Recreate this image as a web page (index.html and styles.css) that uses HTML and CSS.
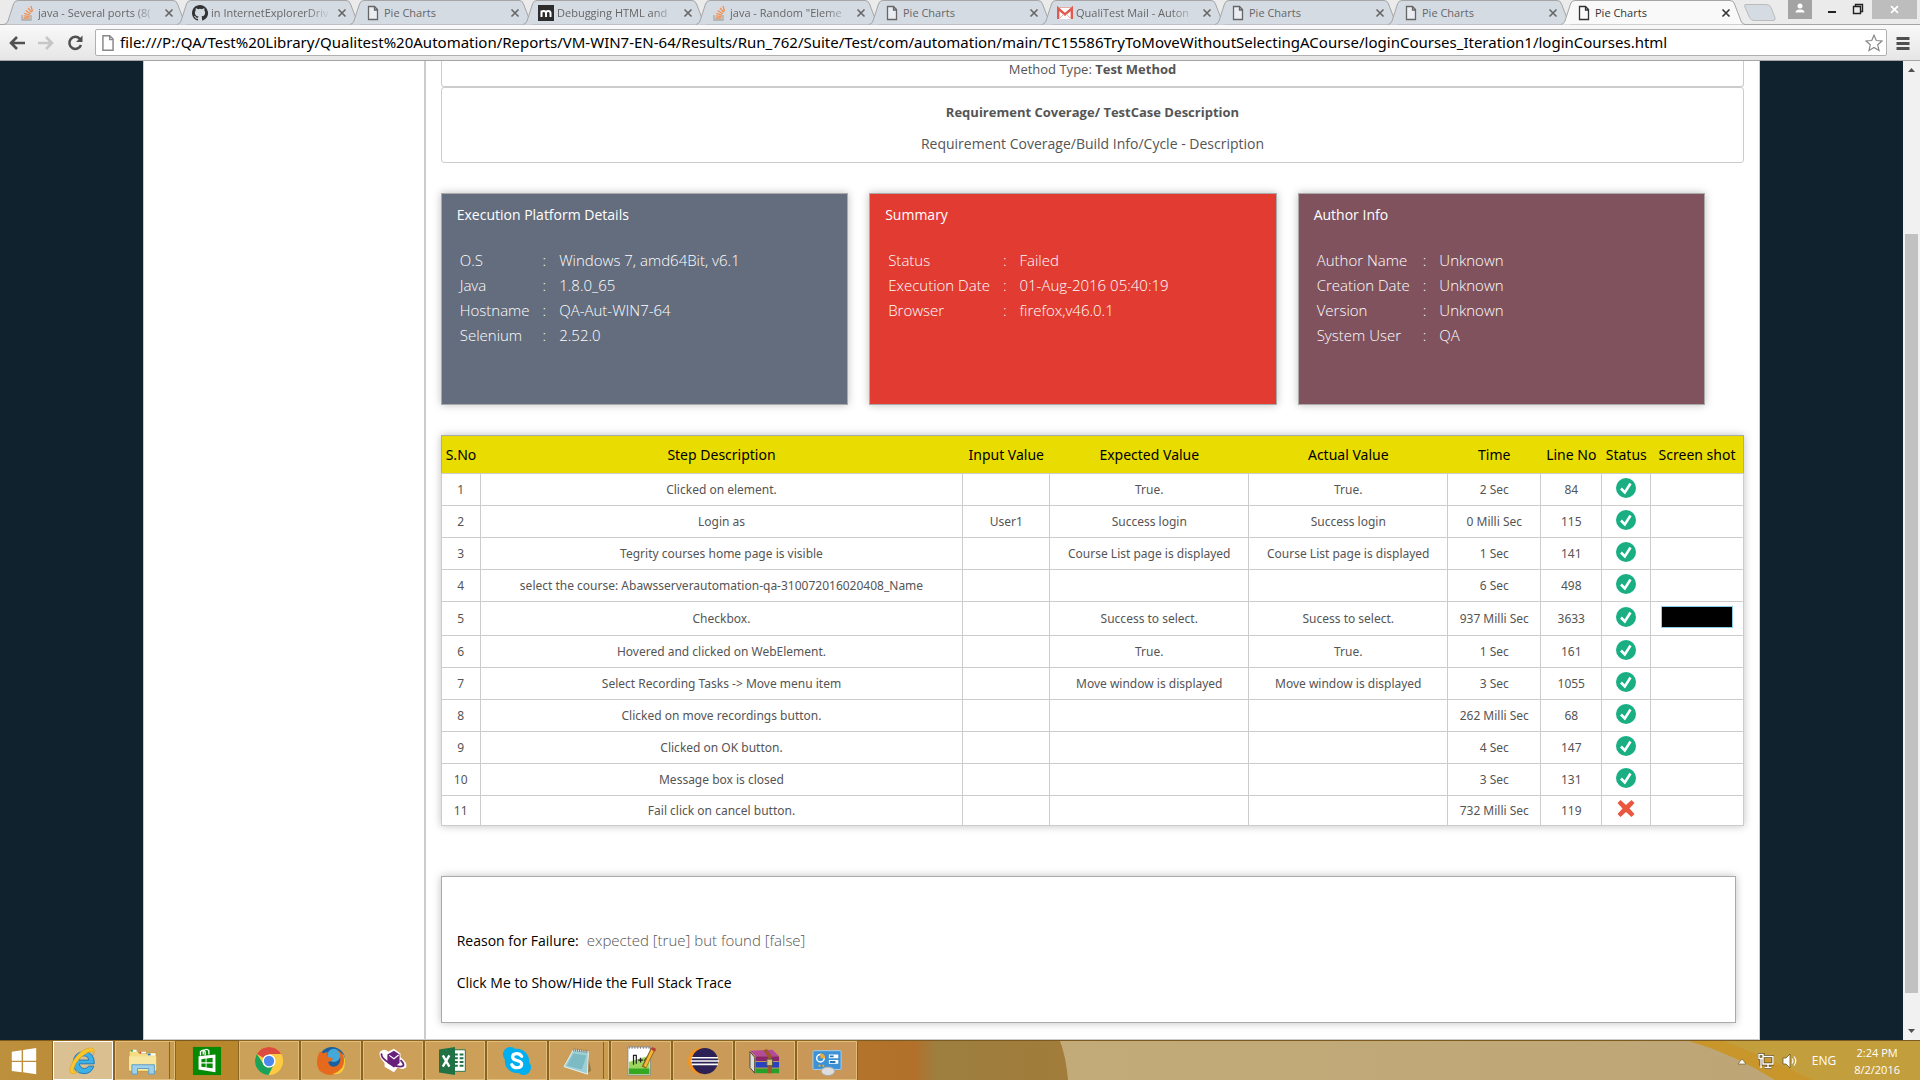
FILE: index.html
```html
<!DOCTYPE html>
<html lang="en">
<head>
<meta charset="utf-8">
<title>Pie Charts</title>
<link rel="stylesheet" href="styles.css">
</head>
<body>
<svg class="defs" aria-hidden="true">
  <symbol id="page" viewBox="0 0 16 16"><path d="M3.5 1.5h6l3 3v10h-9zM9.500 1.500v3.500h3" fill="#fff" fill-opacity=".5" stroke="currentColor" stroke-width="1.300"/></symbol>
  <symbol id="stack" viewBox="0 0 16 16"><path d="M3 10v5h9v-5" fill="none" stroke="#a9a9a9" stroke-width="1.300"/><path d="M4.500 13h6M4.700 10.800l6 .5M5.300 8.300l5.700 1.700M6.700 5.500l5 3.200M9 2.800l3.600 4.600M12 1l1.500 5.500" stroke="#ef8f50" stroke-width="1.300"/></symbol>
  <symbol id="github" viewBox="0 0 16 16"><path fill="#333" d="M8 0C3.580 0 0 3.580 0 8c0 3.540 2.290 6.530 5.470 7.590.4.070.55-.17.55-.38v-1.490c-2.010.37-2.530-.49-2.690-.94-.09-.23-.48-.94-.82-1.130-.28-.15-.68-.52-.01-.53.63-.01 1.080.58 1.230.82.72 1.210 1.870.87 2.330.66.07-.52.28-.87.51-1.070-1.780-.2-3.640-.89-3.640-3.950 0-.87.31-1.590.82-2.150-.08-.2-.36-1.020.08-2.120 0 0 .67-.21 2.200.82a7.600 7.600 0 0 1 4 0c1.530-1.040 2.200-.82 2.200-.82.44 1.100.16 1.920.08 2.120.51.56.82 1.270.82 2.150 0 3.070-1.870 3.750-3.650 3.950.29.25.54.73.54 1.480v2.200c0 .21.15.46.55.38A8 8 0 0 0 8 0"/></symbol>
  <symbol id="mlogo" viewBox="0 0 16 16"><path fill="#2c2c2c" d="M0 0h16v16H0z"/><path d="M3.500 12V5.500M3.500 8q0-2 2.200-2T8 8v4M8 8q0-2 2.200-2t2.300 2v4" fill="none" stroke="#fff" stroke-width="2"/></symbol>
  <symbol id="gmail" viewBox="0 0 16 16"><path fill="#fff" d="M0 2h16v12H0z"/><path d="M1.200 14V3.500L8 9.500l6.800-6V14" fill="none" stroke="#df5b52" stroke-width="2.400"/><path d="M2 2.500h12M3 13l4-4M13 13L9 9" stroke="#e9aaa5"/></symbol>
  <symbol id="x" viewBox="0 0 10 10"><path d="M1.500 1.500l7 7M8.500 1.500l-7 7" stroke="currentColor" stroke-width="1.600"/></symbol>
  <symbol id="tabshape" viewBox="0 0 184 25" preserveAspectRatio="none"><path d="M0 24.500Q3 24 4 21L9.500 4Q10.500.5 14 .5H169q3.500 0 4.500 3.500L180 21q1 3 4 3.500" stroke="#a5a5a5"/></symbol>
  <symbol id="pass" viewBox="0 0 20 20"><circle cx="10" cy="10" r="10" fill="#1aaf82"/><path d="M5 10.500l3.800 4L14.500 5.500" fill="none" stroke="#fff" stroke-width="2.600"/></symbol>
  <symbol id="fail" viewBox="0 0 20 20"><path d="M1.500 4l3-3L10 6l5.500-5 3 3L13.500 9.500l5 5.500-3 3L10 13l-5.500 5-3-3 5-5.500z" fill="#e9573f"/></symbol>
</svg>

<header class="chrome">
  <div class="strip">
    <nav class="tabs" aria-label="Tabs">
      <div class="tab"><svg class="shape"><use href="#tabshape"/></svg><svg class="fav"><use href="#stack"/></svg><a class="long" href="#">java - Several ports (8(</a><button aria-label="Close tab"><svg><use href="#x"/></svg></button></div>
      <div class="tab"><svg class="shape"><use href="#tabshape"/></svg><svg class="fav"><use href="#github"/></svg><a class="long" href="#">in InternetExplorerDriv</a><button aria-label="Close tab"><svg><use href="#x"/></svg></button></div>
      <div class="tab"><svg class="shape"><use href="#tabshape"/></svg><svg class="fav"><use href="#page"/></svg><a href="#">Pie Charts</a><button aria-label="Close tab"><svg><use href="#x"/></svg></button></div>
      <div class="tab"><svg class="shape"><use href="#tabshape"/></svg><svg class="fav"><use href="#mlogo"/></svg><a class="long" href="#">Debugging HTML and</a><button aria-label="Close tab"><svg><use href="#x"/></svg></button></div>
      <div class="tab"><svg class="shape"><use href="#tabshape"/></svg><svg class="fav"><use href="#stack"/></svg><a class="long" href="#">java - Random "Eleme</a><button aria-label="Close tab"><svg><use href="#x"/></svg></button></div>
      <div class="tab"><svg class="shape"><use href="#tabshape"/></svg><svg class="fav"><use href="#page"/></svg><a href="#">Pie Charts</a><button aria-label="Close tab"><svg><use href="#x"/></svg></button></div>
      <div class="tab"><svg class="shape"><use href="#tabshape"/></svg><svg class="fav"><use href="#gmail"/></svg><a class="long" href="#">QualiTest Mail - Auton</a><button aria-label="Close tab"><svg><use href="#x"/></svg></button></div>
      <div class="tab"><svg class="shape"><use href="#tabshape"/></svg><svg class="fav"><use href="#page"/></svg><a href="#">Pie Charts</a><button aria-label="Close tab"><svg><use href="#x"/></svg></button></div>
      <div class="tab"><svg class="shape"><use href="#tabshape"/></svg><svg class="fav"><use href="#page"/></svg><a href="#">Pie Charts</a><button aria-label="Close tab"><svg><use href="#x"/></svg></button></div>
      <div class="tab active"><svg class="shape"><use href="#tabshape"/></svg><svg class="fav"><use href="#page"/></svg><a href="#">Pie Charts</a><button aria-label="Close tab"><svg><use href="#x"/></svg></button></div>
      <button class="newtab" aria-label="New tab"><svg viewBox="0 0 32 17"><path d="M1 .5h21q4 0 5 3l4 10q1 3-2 3H10q-3 0-4.500-3L1 3Q0 .5 1 .5z" fill="#d5dbe3" stroke="#bbb"/></svg></button>
    </nav>
    <div class="winbtns">
      <button class="user" aria-label="Account"><svg viewBox="0 0 24 19"><circle cx="12" cy="6" r="2.500" fill="#fff"/><path d="M7.500 12.500q0-3 4.500-3t4.500 3z" fill="#fff"/></svg></button>
      <button aria-label="Minimize"><svg viewBox="0 0 24 19"><path d="M8 12h8" stroke="#222" stroke-width="2"/></svg></button>
      <button aria-label="Restore"><svg viewBox="0 0 24 19"><path d="M7.500 6.500h7v7h-7zM9.500 6V4.500h7v7H15" fill="none" stroke="#222" stroke-width="1.400"/></svg></button>
      <button class="close" aria-label="Close"><svg viewBox="0 0 46 19"><path d="M19.500 6l7 7M26.500 6l-7 7" stroke="#fff" stroke-width="1.800"/></svg></button>
    </div>
  </div>
  <div class="toolbar">
    <button aria-label="Back"><svg viewBox="0 0 18 18"><path d="M2.500 9H17M9 3L3 9l6 6" fill="none" stroke="#505050" stroke-width="2.600"/></svg></button>
    <button aria-label="Forward"><svg viewBox="0 0 18 18"><path d="M1 9h14.500M9 3l6 6-6 6" fill="none" stroke="#c6c6c6" stroke-width="2.600"/></svg></button>
    <button aria-label="Reload"><svg viewBox="0 0 18 18"><path d="M13.800 4.800A6 6 0 1 0 15 11" fill="none" stroke="#505050" stroke-width="2.500"/><path d="M16.500 1.500v6.500H10z" fill="#505050"/></svg></button>
    <div class="omnibox">
      <svg class="fav"><use href="#page"/></svg>
      <input aria-label="Address" value="file:///P:/QA/Test%20Library/Qualitest%20Automation/Reports/VM-WIN7-EN-64/Results/Run_762/Suite/Test/com/automation/main/TC15586TryToMoveWithoutSelectingACourse/loginCourses_Iteration1/loginCourses.html">
      <button aria-label="Bookmark"><svg viewBox="0 0 18 18"><path d="M9 1.200l2.300 5.300 5.700.5-4.300 3.800 1.300 5.700-5-3-5 3 1.300-5.700L1 7l5.700-.5z" fill="none" stroke="#888" stroke-width="1.200"/></svg></button>
    </div>
    <button class="menu" aria-label="Menu"><svg viewBox="0 0 18 18"><path d="M2.500 4.500h13M2.500 9.500h13M2.500 14.500h13" stroke="#505050" stroke-width="3"/></svg></button>
  </div>
</header>

<div class="viewport">
  <div class="backdrop">
    <div class="sheet">
      <aside class="side"></aside>
      <main class="main">
        <section class="panel first"><p>Method Type: <b>Test Method</b></p></section>
        <section class="panel second"><p><b>Requirement Coverage/ TestCase Description</b></p><p>Requirement Coverage/Build Info/Cycle - Description</p></section>

        <div class="cards">
          <section class="card platform">
            <h2>Execution Platform Details</h2>
            <table>
              <tr><th scope="row">O.S</th><td>:</td><td>Windows 7, amd64Bit, v6.1</td></tr>
              <tr><th scope="row">Java</th><td>:</td><td>1.8.0_65</td></tr>
              <tr><th scope="row">Hostname</th><td>:</td><td>QA-Aut-WIN7-64</td></tr>
              <tr><th scope="row">Selenium</th><td>:</td><td>2.52.0</td></tr>
            </table>
          </section>
          <section class="card summary">
            <h2>Summary</h2>
            <table>
              <tr><th scope="row">Status</th><td>:</td><td>Failed</td></tr>
              <tr><th scope="row">Execution Date</th><td>:</td><td>01-Aug-2016 05:40:19</td></tr>
              <tr><th scope="row">Browser</th><td>:</td><td>firefox,v46.0.1</td></tr>
            </table>
          </section>
          <section class="card author">
            <h2>Author Info</h2>
            <table>
              <tr><th scope="row">Author Name</th><td>:</td><td>Unknown</td></tr>
              <tr><th scope="row">Creation Date</th><td>:</td><td>Unknown</td></tr>
              <tr><th scope="row">Version</th><td>:</td><td>Unknown</td></tr>
              <tr><th scope="row">System User</th><td>:</td><td>QA</td></tr>
            </table>
          </section>
        </div>

        <table class="steps">
          <colgroup><col class="c-no"><col><col class="c-input"><col class="c-value"><col class="c-value"><col class="c-time"><col class="c-line"><col class="c-status"><col class="c-shot"></colgroup>
          <thead><tr><th>S.No</th><th>Step Description</th><th>Input Value</th><th>Expected Value</th><th>Actual Value</th><th>Time</th><th>Line No</th><th>Status</th><th>Screen shot</th></tr></thead>
          <tbody>
            <tr><td>1</td><td>Clicked on element.</td><td></td><td>True.</td><td>True.</td><td>2 Sec</td><td>84</td><td><svg role="img" aria-label="Passed"><use href="#pass"/></svg></td><td></td></tr>
            <tr><td>2</td><td>Login as</td><td>User1</td><td>Success login</td><td>Success login</td><td>0 Milli Sec</td><td>115</td><td><svg role="img" aria-label="Passed"><use href="#pass"/></svg></td><td></td></tr>
            <tr><td>3</td><td>Tegrity courses home page is visible</td><td></td><td>Course List page is displayed</td><td>Course List page is displayed</td><td>1 Sec</td><td>141</td><td><svg role="img" aria-label="Passed"><use href="#pass"/></svg></td><td></td></tr>
            <tr><td>4</td><td>select the course: Abawsserverautomation-qa-310072016020408_Name</td><td></td><td></td><td></td><td>6 Sec</td><td>498</td><td><svg role="img" aria-label="Passed"><use href="#pass"/></svg></td><td></td></tr>
            <tr class="tall"><td>5</td><td>Checkbox.</td><td></td><td>Success to select.</td><td>Sucess to select.</td><td>937 Milli Sec</td><td>3633</td><td><svg role="img" aria-label="Passed"><use href="#pass"/></svg></td><td><a class="shot" href="#" aria-label="Open screen shot"></a></td></tr>
            <tr><td>6</td><td>Hovered and clicked on WebElement.</td><td></td><td>True.</td><td>True.</td><td>1 Sec</td><td>161</td><td><svg role="img" aria-label="Passed"><use href="#pass"/></svg></td><td></td></tr>
            <tr><td>7</td><td>Select Recording Tasks -&gt; Move menu item</td><td></td><td>Move window is displayed</td><td>Move window is displayed</td><td>3 Sec</td><td>1055</td><td><svg role="img" aria-label="Passed"><use href="#pass"/></svg></td><td></td></tr>
            <tr><td>8</td><td>Clicked on move recordings button.</td><td></td><td></td><td></td><td>262 Milli Sec</td><td>68</td><td><svg role="img" aria-label="Passed"><use href="#pass"/></svg></td><td></td></tr>
            <tr><td>9</td><td>Clicked on OK button.</td><td></td><td></td><td></td><td>4 Sec</td><td>147</td><td><svg role="img" aria-label="Passed"><use href="#pass"/></svg></td><td></td></tr>
            <tr><td>10</td><td>Message box is closed</td><td></td><td></td><td></td><td>3 Sec</td><td>131</td><td><svg role="img" aria-label="Passed"><use href="#pass"/></svg></td><td></td></tr>
            <tr class="short"><td>11</td><td>Fail click on cancel button.</td><td></td><td></td><td></td><td>732 Milli Sec</td><td>119</td><td><svg role="img" aria-label="Failed"><use href="#fail"/></svg></td><td></td></tr>
          </tbody>
        </table>

        <section class="failure">
          <p><strong>Reason for Failure:</strong><span>expected [true] but found [false]</span></p>
          <button>Click Me to Show/Hide the Full Stack Trace</button>
        </section>
      </main>
    </div>
  </div>
  <div class="scrollbar" aria-hidden="true">
    <svg viewBox="0 0 17 17"><path d="M5 11h7L8.500 7z" fill="#505050"/></svg>
    <div class="track"><div class="thumb"></div></div>
    <svg viewBox="0 0 17 17"><path d="M5 6h7l-3.500 4z" fill="#505050"/></svg>
  </div>
</div>

<footer class="taskbar">
  <svg class="wall" viewBox="0 0 1920 40" preserveAspectRatio="none" aria-hidden="true">
    <defs><linearGradient id="w"><stop offset="0" stop-color="#bd903d"/><stop offset=".1" stop-color="#b8862c"/><stop offset=".25" stop-color="#bb862a"/><stop offset=".42" stop-color="#b5772b"/><stop offset=".476" stop-color="#b2702a"/><stop offset=".488" stop-color="#9d7f3f"/><stop offset=".55" stop-color="#a17c3a"/></linearGradient>
    <linearGradient id="t"><stop offset="0" stop-color="#c2ab78"/><stop offset="1" stop-color="#bda477"/></linearGradient></defs>
    <path d="M0 0h1920v40H0z" fill="url(#w)"/><path d="M1060 0h860v40h-852q-2-24-8-40z" fill="url(#t)"/><path d="M1689 0h231v40h-145q-40-26-86-40z" fill="#c8962a"/><path d="M1722 0h198v40h-108q-50-26-90-40z" fill="#c39e3c"/>
  </svg>
  <nav class="apps" aria-label="Taskbar">
    <button class="start" aria-label="Start"><svg viewBox="0 0 32 32"><path d="M3 6l10.500-1.600v11.200H3zM15 4.200L29 2v13.600H15zM3 17h10.500v11L3 26.600zM15 17h14v13l-14-2z" fill="#fff"/></svg></button>
    <button class="app on" aria-label="Internet Explorer"><svg viewBox="0 0 32 32"><path d="M28 19H12q1 5 5.500 5 3 0 4.500-2.500h5.500Q25 29.500 17 29.500 6 29 5.500 18 6 6.500 17 6q11.500.5 11 13zM12 15h10q-.5-4.500-5-4.500T12 15z" fill="#3db1e6" stroke="#1b78b8"/><path d="M27 10q3-8-3-8Q14 3 6 15q-6 11-3 14 3 2 8-2-5 2-5-2 1-7 8-13 8-7 12-6 2 1 1 4z" fill="#f9c72a" stroke="#dc9d10" stroke-width=".6"/></svg></button>
    <button class="app multi" aria-label="File Explorer"><svg viewBox="2 0 32 32"><path d="M1 6q0-1 1-1h8l2 3h8l2-1h8v20H1z" fill="#f5dd83" stroke="#bf9a3d"/><path d="M3 4h6v2H3zM12 6h7v2h-7zM21 8h8v2h-8z" fill="#fff"/><path d="M3 4h2v2H3z" fill="#2aa33b"/><path d="M12 6h2v2h-2z" fill="#d6402f"/><path d="M21 8h3v2h-3z" fill="#2779c7"/><path d="M1 11h29v15H1z" fill="#f8e7a1"/><path d="M4 30V20h24v10h-6v-6H10v6z" fill="#9fd0ea" stroke="#5b9cc4"/></svg></button>
    <button class="app plain" aria-label="Store"><svg viewBox="0 0 32 32"><path d="M1 1h30v30H1z" fill="#058a05"/><path d="M7 11l18-2v19L7 25z" fill="#fff"/><path d="M9 10V6q3-3 5 0v4M12 9V5q4-3 6 0v4" fill="none" stroke="#fff" stroke-width="1.400"/><path d="M10 14l4.500-.6v4H10zM15.500 13.200l6.500-.8v5h-6.500zM10 18.600h4.500v4L10 22zM15.500 18.600H22v5l-6.500-.8z" fill="#058a05"/></svg></button>
    <button class="app" aria-label="Chrome"><svg viewBox="0 0 32 32"><circle cx="16" cy="16" r="15" fill="#fccb42"/><path d="M16 16L3 8.500A15 15 0 0 1 29 8.500H16z" fill="#db4b3e"/><path d="M3 8.500A15 15 0 0 0 15.500 31l5.500-11-5 3q-4 0-6-4z" fill="#1ba25a"/><circle cx="16" cy="16" r="7" fill="#fff"/><circle cx="16" cy="16" r="5.500" fill="#4b89ee"/></svg></button>
    <button class="app" aria-label="Firefox"><svg viewBox="0 0 32 32"><circle cx="17" cy="15" r="14" fill="#1b5f9f"/><circle cx="19" cy="10" r="7" fill="#43a8da"/><path d="M4 6q3 0 4 2 3-2 5-1-3 3 0 5 4 0 5 2-2 3-5 3 1 5 6 5 7-1 7-8 0-6-4-10 9 4 8.500 13Q30 29 16 31 1 30 1 17 1 11 4 6z" fill="#e66a1e"/><path d="M28 8q4 7 0 15-5 6-11 7 14 2 14-14 0-5-3-8z" fill="#f8ca39"/></svg></button>
    <button class="app" aria-label="Visual Studio"><svg viewBox="0 0 32 32"><path d="M2 6q5-4 9 0l6-3 7 5v4q8 6 6 11-4 3-9 0l-4 5-10-6v-4Q0 11 2 6z" fill="#fff"/><path d="M10 9l7-4 6 4v9l-6 5-7-5z" fill="#68217a"/><path d="M11 11l6 4 5-4M4 8q-2 4 8 10 11 6 15 3 1-2-3-6" fill="none" stroke="#68217a" stroke-width="2"/><path d="M12 10l5 3.500 5-4" fill="none" stroke="#fff" stroke-width="1.300"/></svg></button>
    <button class="app" aria-label="Excel"><svg viewBox="3 0 32 32"><path d="M17 4h13v23H17z" fill="#fff" stroke="#207245"/><path d="M18 8h4v2h-4zM24 8h4v2h-4zM18 12h4v2h-4zM24 12h4v2h-4zM18 16h4v2h-4zM24 16h4v2h-4zM18 20h4v2h-4zM24 20h4v2h-4z" fill="#207245"/><path d="M1 4l18-3v30L1 28z" fill="#207245"/><path d="M6 10l7 12M13 10L6 22" stroke="#fff" stroke-width="2.500"/></svg></button>
    <button class="app" aria-label="Skype"><svg viewBox="0 0 32 32"><circle cx="9" cy="9" r="8" fill="#00aff0"/><circle cx="23" cy="23" r="8" fill="#00aff0"/><circle cx="16" cy="16" r="13" fill="#00aff0"/><path d="M21 11q-2-3-5.500-2.800-4 .3-4.200 3.300 0 3 4.700 4 5 1 5 4-.3 3.500-5 3.700-4 0-5.500-3.200" fill="none" stroke="#fff" stroke-width="3.400" stroke-linecap="round"/></svg></button>
    <button class="app multi" aria-label="Notepad"><svg viewBox="2 0 32 32"><path d="M27 8l4 18-4 3z" fill="#9a7840"/><path d="M12 4l16 2-1 24-25-8z" fill="#9fcfd4" stroke="#e9f4f4"/><path d="M12 8l14 2-5 15-16-4z" fill="#66adb7" opacity=".6"/><path d="M12 4l16 2" stroke="#777" stroke-width="3" stroke-dasharray="1 1"/></svg></button>
    <button class="app" aria-label="Notepad++"><svg viewBox="0 0 32 32"><path d="M2 1h24v30H2z" fill="#fff" stroke="#888"/><path d="M3 17l22-7v20H3z" fill="#9dd65d"/><path d="M3 24h22v6H3z" fill="#35a822"/><path d="M3 2h22" stroke="#777" stroke-width="2" stroke-dasharray="1 2"/><path d="M8 20V10h3v9M13 15h5M15.500 12.500v5M19 15h4M21 13v4" stroke="#222" stroke-width="1.300" fill="none"/><path d="M29 3L19 23" stroke="#8b601e" stroke-width="5"/><path d="M28.500 4L20 22" stroke="#f6b739" stroke-width="3"/><path d="M28 1l4 2-1 3-4-2z" fill="#b63c36"/></svg></button>
    <button class="app" aria-label="Eclipse"><svg viewBox="0 0 32 32"><circle cx="14" cy="16" r="14" fill="#f7941e"/><circle cx="18" cy="16" r="14" fill="#2c2255"/><path d="M4 12.500h28M3 16h30M4 19.500h28" stroke="#fff" stroke-width="1.800"/></svg></button>
    <button class="app" aria-label="WinRAR"><svg viewBox="0 0 32 32"><path d="M0 6l5 6v17l-5-6z" fill="#ddd" stroke="#443"/><path d="M0 5l24-1 7 7H6z" fill="#b34b99"/><path d="M6 11h25v5H6z" fill="#8a2470"/><path d="M6 17h25v6H6z" fill="#2743c2"/><path d="M6 24h25v5H6z" fill="#25a12a"/><path d="M16 4l5 7v18" fill="none" stroke="#9b582a" stroke-width="4"/><path d="M18 14h6v7h-6z" fill="#d9c27d" stroke="#554"/></svg></button>
    <button class="app" aria-label="Control Panel"><svg viewBox="0 0 32 32"><rect x="1" y="5" width="30" height="20" rx="1" fill="#3d92d6" stroke="#a5d1ef"/><circle cx="9" cy="13" r="4" fill="none" stroke="#fff" stroke-width="1.500"/><path d="M9 13V8q5 0 5 5z" fill="#f9a829"/><path d="M18 11h10M18 17h10" stroke="#fff" stroke-width="4"/><path d="M19 11h4M19 17h6" stroke="#2178b9" stroke-width="2"/><path d="M7 21h2M11 21h2" stroke="#f9a829" stroke-width="2"/><ellipse cx="17" cy="27" rx="7" ry="4.500" fill="#ddd" stroke="#aaa"/></svg></button>
  </nav>
  <div class="tray">
    <button aria-label="Show hidden icons"><svg viewBox="0 0 16 16"><path d="M4 11h8L8 6z" fill="#fff" stroke="#665020" stroke-width=".6"/></svg></button>
    <button aria-label="Network"><svg viewBox="0 0 16 16"><path d="M5 3.500h10v7.500H5zM10 11v3M6.500 14.500h7M1 1.500h4v4H1zM3 6v7" fill="none" stroke="#5a471c" stroke-width="3"/><path d="M5 3.500h10v7.500H5zM10 11v3M6.500 14.500h7M1 1.500h4v4H1zM3 6v9" fill="none" stroke="#fff" stroke-width="1.400"/></svg></button>
    <button aria-label="Volume"><svg viewBox="0 0 16 16"><path d="M1 5h3l4-4v14l-4-4H1z" fill="#fff" stroke="#5a471c" stroke-width=".7"/><path d="M10 5.500q2 2.500 0 5M12 3.500q3.500 4.500 0 9" fill="none" stroke="#fff" stroke-width="1.200"/></svg></button>
    <span class="lang">ENG</span>
    <time class="clock"><span>2:24 PM</span><span>8/2/2016</span></time>
  </div>
</footer>
</body>
</html>
```
FILE: styles.css
```css
* { box-sizing: border-box; }
body {
  margin: 0;
  height: 100vh;
  display: flex;
  flex-direction: column;
  overflow: hidden;
  font-family: "Open Sans", "Noto Sans", sans-serif;
}
button {
  padding: 0;
  border: 0;
  background: none;
  color: inherit;
  font: inherit;
}
a { color: inherit; text-decoration: none; }
svg { display: block; }
.defs { display: none; }

/* Browser frame */
.chrome { flex: none; background: #ebebeb; }
.strip { display: flex; justify-content: space-between; height: 24px; }
.tabs { display: flex; padding-left: 4px; }
.tab {
  position: relative;
  display: flex;
  align-items: center;
  width: 184px;
  height: 25px;
  margin-right: -11px;
  padding: 0 14px 0 15px;
  color: #666;
  font-size: 11px;
}
.tab .shape {
  position: absolute;
  inset: 0;
  width: 100%;
  height: 100%;
  fill: #d5dbe3;
}
.fav { position: relative; flex: none; width: 16px; height: 16px; }
.tab a {
  position: relative;
  flex: 1;
  margin-left: 3px;
  white-space: nowrap;
}
.tab .long { mask-image: linear-gradient(to left, transparent, #000 24px); }
.tab button { position: relative; margin-left: 6px; }
.tab button svg { width: 10px; height: 10px; }
.active { z-index: 1; color: #333; }
.tab.active .shape { fill: #f9f9f9; }
.newtab { align-self: center; margin-left: 10px; }
.newtab svg { width: 32px; height: 17px; }
.winbtns { display: flex; gap: 2px; padding-right: 3px; }
.winbtns button { height: 19px; }
.winbtns svg { width: 24px; height: 19px; }
.winbtns .user { margin-right: 6px; background: #a3a3a3; }
.winbtns .close { background: #bdbdbd; }
.winbtns .close svg { width: 45px; }
.toolbar {
  display: flex;
  align-items: center;
  gap: 11px;
  height: 37px;
  padding: 0 8px;
  border-top: 1px solid #a5a5a5;
  border-bottom: 1px solid #a5a5a5;
  background: linear-gradient(#f9f9f9, #e6e6e6);
}
.toolbar svg { width: 18px; height: 18px; }
.toolbar .menu { margin-left: -4px; }
.omnibox {
  flex: 1;
  display: flex;
  align-items: center;
  height: 27px;
  padding: 0 3px;
  border: 1px solid #b0b0b0;
  border-radius: 2px;
  background: #fff;
  color: #888;
}
.omnibox input {
  flex: 1;
  min-width: 0;
  margin-left: 3px;
  padding: 0 0 2px;
  border: 0;
  outline: 0;
  color: #000;
  font: 15px "Noto Sans", "Open Sans", sans-serif;
}

/* Page area */
.viewport { flex: 1; display: flex; min-height: 0; }
.backdrop { flex: 1; background: #11222f; overflow: hidden; }
.sheet {
  display: flex;
  width: 85%;
  height: 100%;
  margin: 0 auto;
  border: 1px solid #ccc;
  border-top: 0;
  background: #fff;
}
.side { flex: none; width: 282px; border-right: 2px solid #ccc; }
.main { flex: 1; min-width: 0; padding: 0 15px; }

.panel {
  border: 1px solid #ccc;
  border-radius: 3px;
  color: #555;
  font-size: 13px;
  line-height: 16px;
  text-align: center;
}
.panel p { margin: 0; }
.first { border-top: 0; border-radius: 0 0 3px 3px; padding-bottom: 9px; }
.second { padding: 16px 0 10px; }
.second p + p { margin-top: 16px; font-size: 14px; }

.cards {
  display: grid;
  grid-template-columns: repeat(3, 1fr);
  gap: 21px;
  width: 97%;
  margin-top: 30px;
}
.card {
  height: 212px;
  padding: 9px 15px;
  border: 1px solid #aaa;
  box-shadow: 0 0 8px rgba(0, 0, 0, .25);
  color: #fff;
  font-size: 15px;
}
.card h2 { margin: 0 0 21px; font-size: 14px; line-height: 24px; font-weight: 500; }
.card table { border-collapse: collapse; }
.card th, .card td { padding: 0 10px 0 3px; font-weight: 300; line-height: 25px; text-align: left; }
.platform { background: #646d7e; }
.summary { background: #e13b32; }
.author { background: #80525d; }

.steps {
  width: 100%;
  margin-top: 30px;
  border-collapse: collapse;
  table-layout: fixed;
  box-shadow: 0 0 8px rgba(0, 0, 0, .25);
  color: #555;
  font-family: "Noto Sans", "Open Sans", sans-serif;
  font-size: 12px;
  line-height: 16px;
  text-align: center;
}
.c-no { width: 39px; }
.c-input { width: 87px; }
.c-value { width: 199px; }
.c-time { width: 93px; }
.c-line { width: 61px; }
.c-status { width: 49px; }
.c-shot { width: 93px; }
.steps thead { border: 1px solid #aaa; border-bottom-color: #ccc; background: #e9dc00; }
.steps th { height: 38px; padding: 0; color: #000; font-size: 14px; font-weight: 400; white-space: nowrap; }
.steps td { height: 32px; padding: 0; border: 1px solid #ccc; white-space: nowrap; }
.steps .tall td { height: 34px; }
.steps .short td { height: 30px; }
.steps td svg { width: 20px; height: 20px; margin: 0 auto 3px; }
.shot { display: block; width: 72px; height: 22px; margin: 0 auto 3px; border: 1px solid #87ceeb; background: #000; }

.failure {
  margin: 50px 8px 0 0;
  padding: 51px 15px 27px;
  border: 1px solid #aaa;
  box-shadow: 0 0 8px rgba(0, 0, 0, .25);
  color: #000;
  font-size: 14px;
  line-height: 24px;
}
.failure p { margin: 0 0 18px; }
.failure strong { margin-right: 8px; font-weight: 500; }
.failure span { color: #555; font-size: 15px; font-weight: 300; }
.failure button { display: block; font-weight: 500; }

.scrollbar { flex: none; display: flex; flex-direction: column; width: 17px; background: #f1f1f1; }
.scrollbar svg { width: 17px; height: 17px; }
.track { flex: 1; display: flex; flex-direction: column; justify-content: flex-end; align-items: center; padding-bottom: 30px; }
.thumb { width: 13px; height: 83%; background: #c1c1c1; }

/* Desktop taskbar */
.taskbar {
  position: relative;
  flex: none;
  display: flex;
  justify-content: space-between;
  height: 40px;
  border-top: 1px solid #7d5a20;
  color: #fff;
}
.wall { position: absolute; inset: 0; width: 100%; height: 100%; }
.apps { position: relative; display: flex; gap: 2px; }
.apps svg { width: 32px; height: 30px; margin: 0 auto; }
.apps .start { width: 51px; padding-right: 3px; }
.app {
  width: 60px;
  border: 1px solid #e1bd7c;
  outline: 1px solid #8c6422;
  background: rgba(222, 186, 135, .5);
}
.app.on { border-color: #fff; background: rgba(235, 220, 195, .65); }
.app.plain { border-color: transparent; outline: 0; background: none; }
.app.multi { box-shadow: inset -4px 0 #c99d50, inset -5px 0 #8c6422; }
.tray { position: relative; display: flex; align-items: center; gap: 8px; padding-right: 20px; font-size: 12px; }
.tray svg { width: 16px; height: 16px; }
.lang { margin-left: 6px; }
.clock { display: flex; flex-direction: column; margin-left: 10px; font-size: 11px; line-height: 17px; text-align: center; }
```
